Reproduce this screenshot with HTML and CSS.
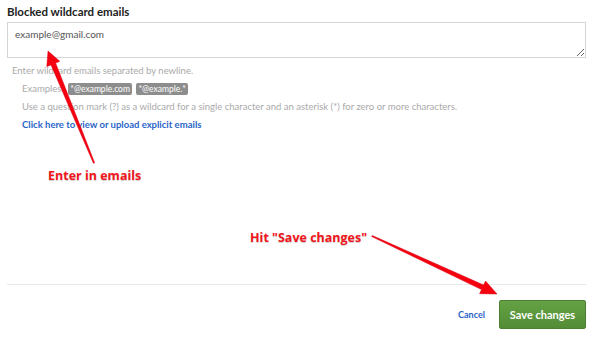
FILE: index.html
```html
<!DOCTYPE html>
<html lang="en">

<head>
    <meta charset="UTF-8">
    <meta name="viewport" content="width=device-width, initial-scale=1.0">
    <link rel="stylesheet" href="styles.css">
    <title>Blocked wildcard emails</title>
</head>

<body>
    <div class="page">
        <div class="field">
            <label class="fieldLabel" for="wildcards">Blocked wildcard emails</label>
            <textarea id="wildcards" class="control">example@gmail.com</textarea>
            <div class="help">
                <p>Enter wildcard emails separated by newline.</p>
                <div class="helpList">
                    <p>Examples: <span class="tag">*@example.com</span> <span class="tag">*@example.*</span></p>
                    <p>Use a question mark (?) as a wildcard for a single character and an asterisk (*) for zero or more characters.</p>
                    <p><a href="#" class="link">Click here to view or upload explicit emails</a></p>
                </div>
            </div>
        </div>

        <div class="footer">
            <a href="#" class="cancel">Cancel</a>
            <button type="button" class="save">Save changes</button>
        </div>
    </div>

    <!-- annotations -->
    <svg class="notes" width="600" height="343">
        <polygon class="arrow" points="48,51 59.8,61.3 55.6,63 94.6,162.8 93.4,163.2 51,64.9 46.8,66.6" />
        <polygon class="arrow" points="497,294 485.5,281 483.6,285 372.3,235.5 371.7,236.5 481.5,289.6 479.6,293.7" />
    </svg>
    <div class="note noteEmails">Enter in emails</div>
    <div class="note noteSave">Hit "Save changes"</div>
</body>
</html>
```

FILE: styles.css
```css
* {
    box-sizing: border-box;
}

body {
    margin: 0;
    background-color: #fff;
    font-family: "Lato", "Open Sans", sans-serif;
    color: #333;
}

.page {
    height: 343px;
    padding: 5px 14px 0 7px;
    display: flex;
    flex-direction: column;
}

.field {
    flex: 1;
}

.fieldLabel {
    display: block;
    font-size: 11.5px;
    font-weight: bold;
    color: #222;
    margin-bottom: 4px;
}

.control {
    display: block;
    width: 100%;
    height: 36px;
    border: 1px solid #d4d4d4;
    padding: 5px 7px;
    font-family: inherit;
    font-size: 10px;
    color: #555;
    resize: vertical;
}

.help {
    padding-left: 5px;
    font-size: 9.5px;
    color: #aaa;
}

.help p {
    margin: 0;
    line-height: 17.5px;
}

.help > p {
    margin-top: 4px;
}

.helpList {
    padding-left: 10px;
}

.tag {
    background-color: #8d8d8d;
    color: #fff;
    font-size: 8.5px;
    padding: 1px 2px;
    margin-left: 2px;
    border-radius: 2px;
}

.link {
    color: #2a64c8;
    font-weight: bold;
    text-decoration: none;
}

.footer {
    border-top: 1px solid #e8e8e8;
    height: 59px;
    display: flex;
    align-items: center;
    justify-content: flex-end;
    gap: 14px;
}

.cancel {
    color: #2a64c8;
    font-size: 9px;
    font-weight: bold;
    text-decoration: none;
}

.save {
    width: 87px;
    height: 29px;
    border: 1px solid #4b7f31;
    border-radius: 2px;
    background: linear-gradient(#65a244, #528c35);
    color: #fff;
    font-family: inherit;
    font-size: 11px;
    font-weight: bold;
}

.notes {
    position: absolute;
    left: 0;
    top: 0;
    pointer-events: none;
}

.arrow {
    fill: #f5000f;
    stroke: #d80010;
    stroke-width: 0.5;
}

.note {
    position: absolute;
    font-family: "Open Sans", sans-serif;
    font-weight: bold;
    font-size: 12.5px;
    color: #f2151c;
    text-shadow: 0 1px 1px rgba(0, 0, 0, 0.2);
}

.noteEmails {
    left: 48px;
    top: 167px;
}

.noteSave {
    left: 250px;
    top: 229px;
}
```
